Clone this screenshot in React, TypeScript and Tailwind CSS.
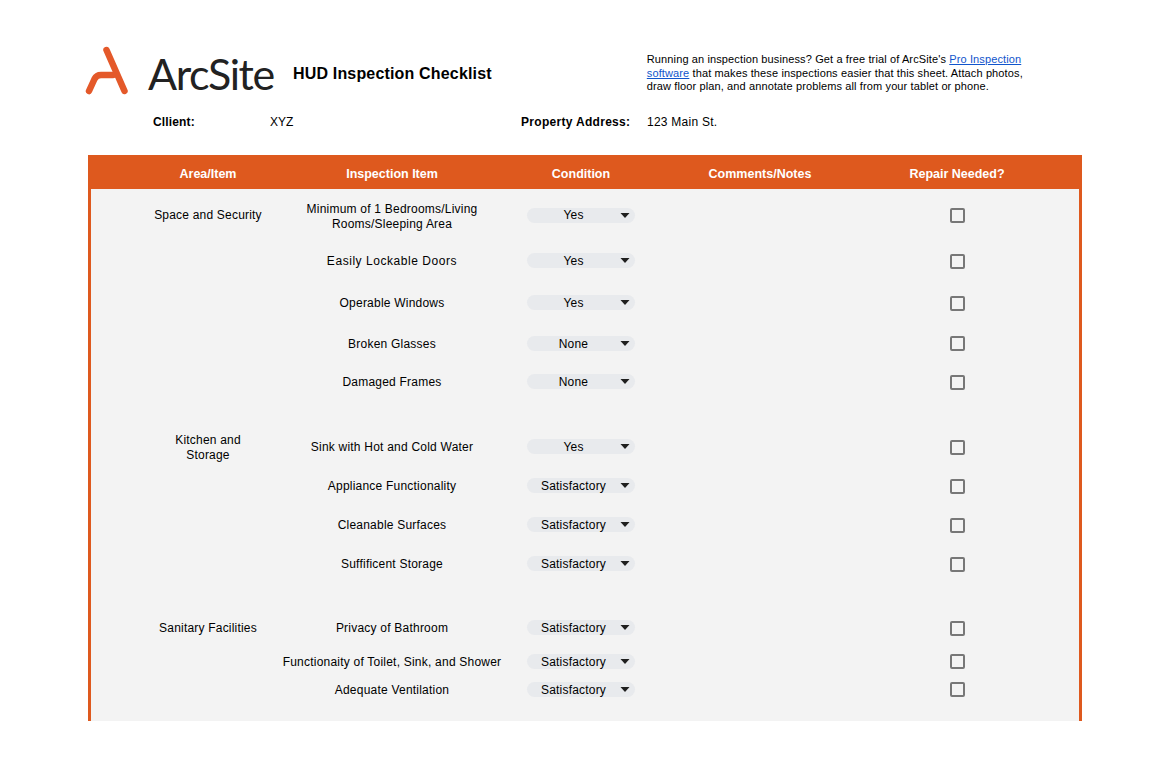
import React from 'react';

type Row = {
	area?: string;
	item: React.ReactNode;
	value: string;
	rowClass: string;
	itemClass?: string;
	pillClass?: string;
	boxClass?: string;
};

const rows: Row[] = [
	{ area: 'Space and Security', item: <>Minimum of 1 Bedrooms/Living<br />Rooms/Sleeping Area</>, value: 'Yes', rowClass: 'h-[42px] mt-[5px]', itemClass: 'mt-[4px]', pillClass: 'mb-0' },
	{ item: 'Easily Lockable Doors', value: 'Yes', rowClass: 'h-[50px]', itemClass: 'tracking-[0.55px]' },
	{ item: 'Operable Windows', value: 'Yes', rowClass: 'h-[34px]' },
	{ item: 'Broken Glasses', value: 'None', rowClass: 'h-[48px]', boxClass: 'mb-[2px]' },
	{ item: 'Damaged Frames', value: 'None', rowClass: 'h-[28px]' },
	{ item: 'Sink with Hot and Cold Water', value: 'Yes', rowClass: 'h-[34px] mt-[34px]' },
	{ item: 'Appliance Functionality', value: 'Satisfactory', rowClass: 'h-[44px]' },
	{ item: 'Cleanable Surfaces', value: 'Satisfactory', rowClass: 'h-[34px]' },
	{ item: 'Suffificent Storage', value: 'Satisfactory', rowClass: 'h-[44px]' },
	{ area: 'Sanitary Facilities', item: 'Privacy of Bathroom', value: 'Satisfactory', rowClass: 'h-[34px] mt-[25px]' },
	{ item: 'Functionaity of Toilet, Sink, and Shower', value: 'Satisfactory', rowClass: 'h-[34px]', boxClass: 'mb-[2px]' },
	{ item: 'Adequate Ventilation', value: 'Satisfactory', rowClass: 'h-[22px]', boxClass: 'mb-[2px]' },
];

const gridCols = 'grid grid-cols-[144px_224px_154px_204px_190px] pl-[45px] items-center text-center';

function Dropdown({ value, className }: { value: string; className?: string }) {
	return (
		<div className={`mx-auto flex h-[15px] w-[108px] items-center rounded-full bg-[#e8eaed] pr-[5px] ${className ?? 'mb-[2px]'}`}>
			<span className={`flex-1 text-center leading-[15px] tracking-[0.2px] ${className ? '' : 'mt-[2px]'}`}>{value}</span>
			<svg width="10" height="5" viewBox="0 0 10 5" className="shrink-0">
				<path d="M0.5 0 H9.5 L5 5 Z" fill="#1f1f1f" />
			</svg>
		</div>
	);
}

export default function App() {
	return (
		<div className="min-h-[765px] bg-white pt-[46px] pl-[85px] font-['Liberation_Sans',Arial,sans-serif] text-[12px] text-black">
			<div className="flex h-[51px] items-start">
				<svg width="46" height="50" viewBox="85 46 46 50" className="shrink-0">
					<path d="M106.5 50 L124.5 91" fill="none" stroke="#e4592a" strokeWidth="6.5" strokeLinecap="round" />
					<path d="M113 75 H101 Q96.5 75 94.5 79 L89 91" fill="none" stroke="#e4592a" strokeWidth="6.5" strokeLinecap="round" strokeLinejoin="round" />
				</svg>
				<span className="ml-[17px] mt-[3px] w-[127px] font-['Lato',sans-serif] text-[43px] leading-[50px] tracking-[-1.4px] text-[#222222]">ArcSite</span>
				<span className="ml-[18px] mt-[18px] text-[16px] font-bold leading-[20px] tracking-[0.17px]">HUD Inspection Checklist</span>
				<p className="ml-[155px] mt-[7px] w-[380px] text-[11px] font-normal leading-[13.5px] tracking-[0.12px]">
					Running an inspection business? Get a free trial of ArcSite's <a href="#" className="text-[#1155cc] underline">Pro Inspection software</a> that makes these inspections easier that this sheet. Attach photos, draw floor plan, and annotate problems all from your tablet or phone.
				</p>
			</div>

			<div className="mt-[18px] flex h-[14px] items-center leading-[14px]">
				<span className="ml-[68px] w-[117px] font-bold tracking-[0.15px]">Cllient:</span>
				<span className="w-[251px]">XYZ</span>
				<span className="w-[126px] font-bold tracking-[0.3px]">Property Address:</span>
				<span className="tracking-[0.25px]">123 Main St.</span>
			</div>

			<div className="mt-[26px] ml-[3px] w-[994px] border-x-[3px] border-[#de591e] bg-[#f3f3f3] pb-[20px]">
				<div className={`${gridCols} -mx-[3px] h-[29px] box-content bg-[#de591e] px-[3px] pl-[48px] pt-[5px] text-[12.5px] font-bold text-white`}>
					<span>Area/Item</span>
					<span>Inspection Item</span>
					<span>Condition</span>
					<span>Comments/Notes</span>
					<span>Repair Needed?</span>
				</div>
				<div className="relative">
					{/* spans two rows in the sheet, sits over the row grid */}
					<div className="absolute left-[45px] top-[239px] w-[144px] text-center leading-[15px] tracking-[0.2px]">Kitchen and<br />Storage</div>
					{rows.map((row, i) => (
						<div key={i} className={`${gridCols} ${row.rowClass}`}>
							<span className="tracking-[0.2px]">{row.area}</span>
							<span className={`leading-[15px] whitespace-nowrap ${row.itemClass?.includes('tracking') ? row.itemClass : `tracking-[0.22px] ${row.itemClass ?? ''}`}`}>{row.item}</span>
							<Dropdown value={row.value} className={row.pillClass} />
							<span />
							<span className={`mx-auto h-[15px] w-[15px] rounded-[2px] border-2 border-[#777777] ${row.boxClass ?? ''}`} />
						</div>
					))}
				</div>
			</div>
		</div>
	);
}
